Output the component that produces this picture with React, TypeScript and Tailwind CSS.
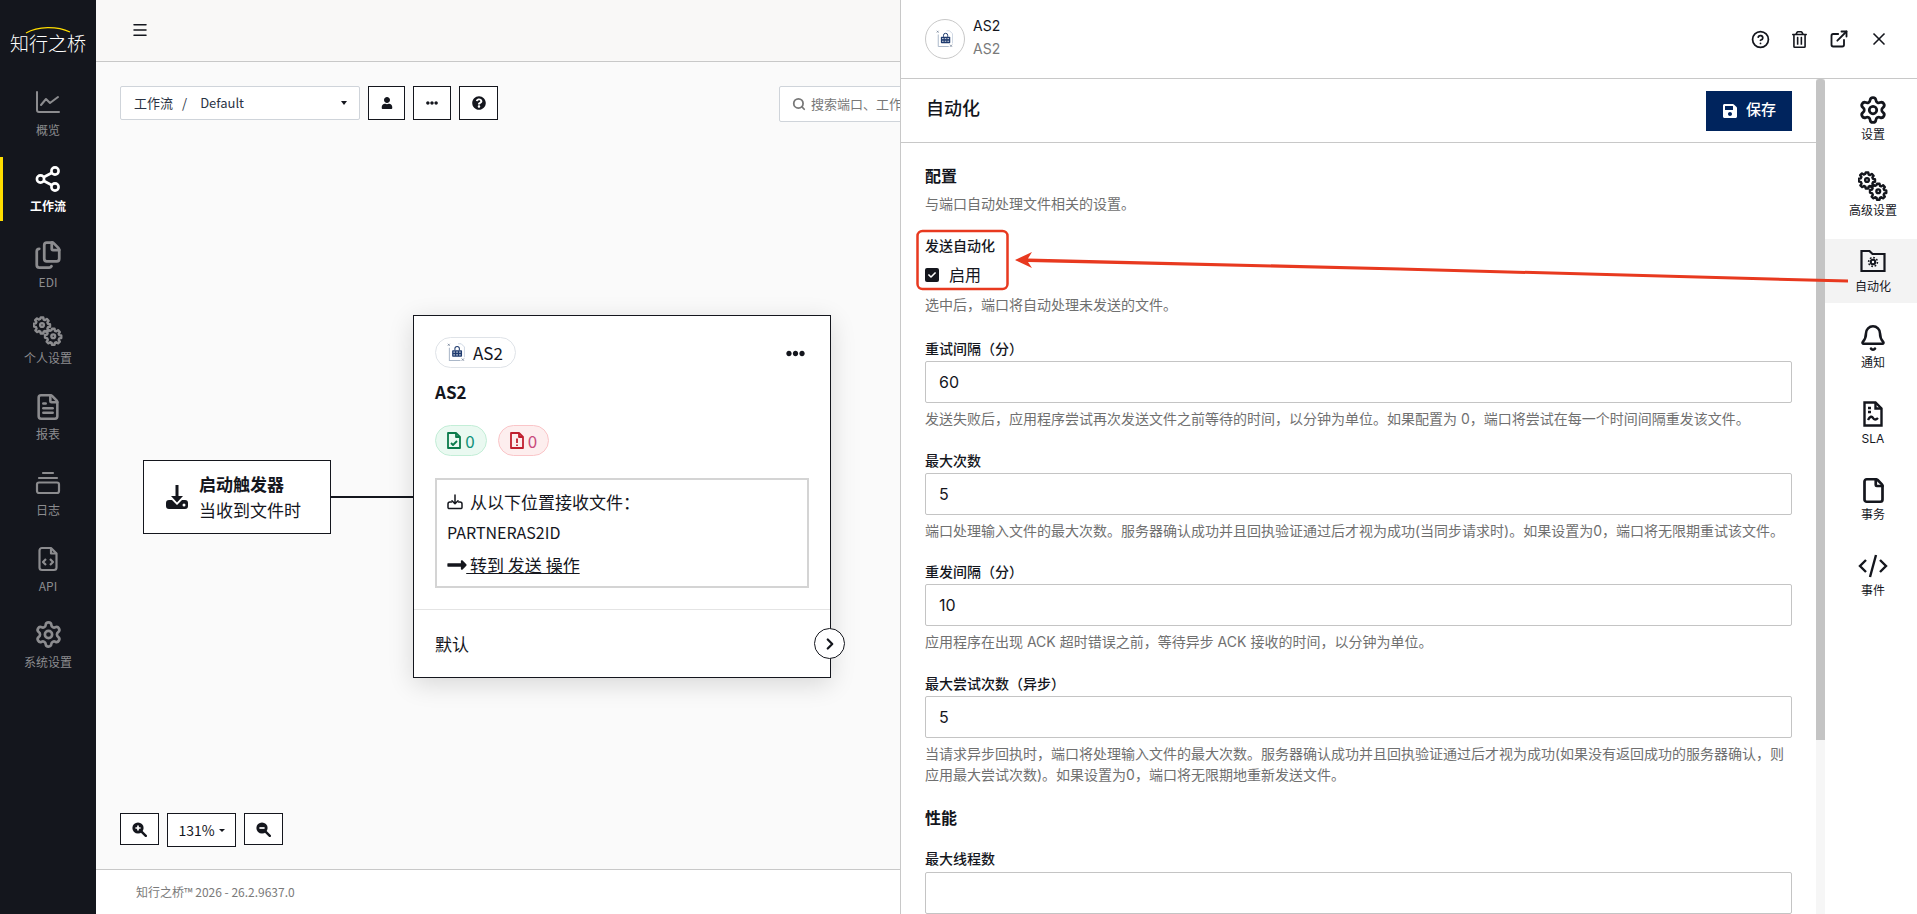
import React from "react";
import {
  Files, FileText, Settings, HelpCircle, ExternalLink, X, Bell, File, ChevronRight, Search, Menu,
} from "lucide-react";
import { FaUser, FaEllipsisH, FaQuestionCircle, FaLongArrowAltRight, FaCheck, FaSave, FaRegTrashAlt } from "react-icons/fa";

const cjk = "font-['Noto_Sans_CJK_SC','Noto_Sans',sans-serif]";
const panelFont = "font-['Inter','Noto_Sans_CJK_SC',sans-serif]";

function Gears({ size = 30 }: { size?: number }) {
  const g = "M12 9.5a2.5 2.5 0 1 0 0 5 2.5 2.5 0 0 0 0-5z M10.3 2h3.4l.5 2.7 1.9.8 2.3-1.6 2.4 2.4-1.6 2.3.8 1.9 2.7.5v3.4l-2.7.5-.8 1.9 1.6 2.3-2.4 2.4-2.3-1.6-1.9.8-.5 2.7h-3.4l-.5-2.7-1.9-.8-2.3 1.6-2.4-2.4 1.6-2.3-.8-1.9L1 13.7v-3.4l2.7-.5.8-1.9-1.6-2.3 2.4-2.4 2.3 1.6 1.9-.8z";
  return (
    <svg width={size} height={size} viewBox="0 0 40 40" fill="none" stroke="currentColor" strokeWidth="3.2" strokeLinejoin="round">
      <path d={g} />
      <g transform="translate(15 15)"><path d={g} /></g>
    </svg>
  );
}

function PortIcon({ size = 18 }: { size?: number }) {
  return (
    <svg width={size} height={size} viewBox="0 0 24 24" fill="none">
      <path d="M14 1h4l4 4v13" stroke="#cbd5e1" strokeWidth="1.2" />
      <path d="M3 6v16h14" stroke="#aab7c8" strokeWidth="1.3" />
      <path d="M1 1l2.5 2.5M3.5 1L1 3.5M18.5 19.5l3 3M21.5 19.5l-3 3" stroke="#64748b" strokeWidth="0.9" />
      <rect x="6.5" y="9" width="12.5" height="8.5" rx="1" fill="#1e3a6e" />
      <path d="M10 9V7a2.8 2.6 0 0 1 5.6 0v2" stroke="#1e3a6e" strokeWidth="1.3" />
      <path d="M8 11.5h2.2M11.6 11.5h2.2M15.2 11.5h2.2M8 15h2.2M11.6 15h2.2M15.2 15h2.2" stroke="#fff" strokeWidth="1.1" />
    </svg>
  );
}

function ZoomIcon({ plus }: { plus?: boolean }) {
  return (
    <svg width="15" height="15" viewBox="0 0 15 15" fill="none">
      <circle cx="6" cy="6" r="5.6" fill="#14161d" />
      <path d={plus ? "M3.4 6h5.2M6 3.4v5.2" : "M3.4 6h5.2"} stroke="#fff" strokeWidth="1.7" />
      <path d="M9.8 9.8L13.8 13.8" stroke="#14161d" strokeWidth="2.4" strokeLinecap="round" />
    </svg>
  );
}

function SideItem({ icon, label, active }: { icon: React.ReactNode; label: string; active?: boolean }) {
  return (
    <div className={`relative flex h-16 flex-col items-center justify-center gap-[3px] ${active ? "border-l-[3px] border-[#ffdd00] pr-[3px] font-bold text-white" : "text-[#8c8c8f]"}`}>
      <div className="flex h-[30px] items-center justify-center">{icon}</div>
      <div className="text-xs leading-[18px]">{label}</div>
    </div>
  );
}

function RailItem({ icon, label, active }: { icon: React.ReactNode; label: string; active?: boolean }) {
  return (
    <div className={`flex h-16 flex-col items-center justify-center gap-[1px] pl-[4px] text-[#14161d] ${active ? "bg-[#f3f3f3]" : ""}`}>
      <div className="flex h-[30px] items-center justify-center">{icon}</div>
      <div className="text-xs leading-[17px]">{label}</div>
    </div>
  );
}

function Field({ label, value, help }: { label: string; value: string; help: React.ReactNode }) {
  return (
    <div className="mb-[21.67px]">
      <div className="mb-[2px] text-[14px] font-medium leading-[20px] text-[#14161d]">{label}</div>
      <div className="flex h-[42px] items-center rounded-[2px] border border-[#c4c4c4] bg-white px-[13px] text-[16px] text-[#14161d]">{value}</div>
      <div className="mt-[5px] text-[14px] leading-[21px] text-[#707070]">{help}</div>
    </div>
  );
}

function CanvasButton({ children, className = "" }: { children: React.ReactNode; className?: string }) {
  return <div className={`flex shrink-0 items-center justify-center border-[1.5px] border-[#14161d] bg-white text-[#14161d] ${className}`}>{children}</div>;
}

export default function App() {
  return (
    <div className={`relative flex h-[914px] w-[1917px] overflow-hidden bg-white ${cjk}`}>
      <aside className="flex w-24 shrink-0 flex-col bg-[#14161d]">
        <div className="relative flex h-[81px] flex-col items-center pt-[30px]">
          <svg className="absolute left-[24px] top-[25px]" width="48" height="9" viewBox="0 0 48 9" fill="none">
            <path d="M2 8C14 1 33 1 46 7" stroke="#ffdd00" strokeWidth="1.3" />
          </svg>
          <div className="text-[19px] font-light leading-[26px] text-white">知行之桥</div>
        </div>
        <div className="flex flex-col gap-3">
          <SideItem label="概览" icon={<svg width="26" height="25" viewBox="0 0 26 25" fill="none" stroke="currentColor" strokeWidth="2" strokeLinejoin="round" strokeLinecap="round"><path d="M2 2v18a2 2 0 0 0 2 2h20" /><path d="M6 15l5-6 4 4 8-6" /></svg>} />
          <SideItem active label="工作流" icon={<svg width="26" height="26" viewBox="0 0 26 26" fill="none" stroke="currentColor" strokeWidth="2.6"><circle cx="5.5" cy="13" r="3.6" /><circle cx="20" cy="5" r="3.6" /><circle cx="20" cy="21" r="3.6" /><path d="M9 11l7.5-4M9 15l7.5 4" /></svg>} />
          <SideItem label="EDI" icon={<Files size={30} strokeWidth={2.2} />} />
          <SideItem label="个人设置" icon={<Gears />} />
          <SideItem label="报表" icon={<FileText size={28} strokeWidth={2.2} />} />
          <SideItem label="日志" icon={<svg width="26" height="24" viewBox="0 0 26 24" fill="none" stroke="currentColor" strokeWidth="2.2" strokeLinecap="round"><path d="M8 2h10M4 7h18" /><rect x="2" y="11.5" width="22" height="10.5" rx="2" /></svg>} />
          <SideItem label="API" icon={<svg width="24" height="26" viewBox="0 0 24 26" fill="none" stroke="currentColor" strokeWidth="2.2" strokeLinejoin="round"><path d="M15 2H6a2.5 2.5 0 0 0-2.5 2.5v17A2.5 2.5 0 0 0 6 24h12a2.5 2.5 0 0 0 2.5-2.5V7.5z" /><path d="M15 2v5.5h5.5" /><path d="M10 13l-3 3 3 3M14 13l3 3-3 3" /></svg>} />
          <SideItem label="系统设置" icon={<Settings size={29} strokeWidth={2.2} />} />
        </div>
      </aside>

      <main className="flex w-[804px] shrink-0 flex-col overflow-hidden bg-[#fafafa]">
        <div className="flex h-[62px] shrink-0 items-center border-b border-[#c8c8c8] bg-[#f9f8f7] pb-[2px] pl-[35px]">
          <Menu size={18} strokeWidth={2} className="text-[#14161d]" />
        </div>
        <div className="relative flex-1">
          <div className="flex items-start pl-[24px] pt-[24px]">
            <div className="flex h-[34px] w-[240px] shrink-0 items-center rounded-[2px] border border-[#cfd4da] bg-white pl-[13px] pr-[12px] text-[13px] text-[#2a3344]">
              <span>工作流</span>
              <span className="ml-[9px]">/</span>
              <span className="ml-[13px]">Default</span>
              <span className="ml-auto h-0 w-0 border-x-[3.5px] border-t-[4px] border-x-transparent border-t-[#14161d]" />
            </div>
            <CanvasButton className="ml-[8px] h-[34px] w-[37px]"><FaUser size={12} /></CanvasButton>
            <CanvasButton className="ml-[8px] h-[34px] w-[38px]"><FaEllipsisH size={12} /></CanvasButton>
            <CanvasButton className="ml-[8px] h-[34px] w-[39px]"><FaQuestionCircle size={14} /></CanvasButton>
            <div className="ml-[281px] flex h-[36px] w-[200px] shrink-0 items-center gap-[5px] rounded-[2px] border border-[#cfd4da] bg-white pl-[12px] text-[13px] text-[#777777]">
              <Search size={14} strokeWidth={3} />
              <span className="whitespace-nowrap">搜索端口、工作流</span>
            </div>
          </div>

          <div className="absolute left-[235px] top-[434px] h-[2px] w-[82px] bg-[#14161d]" />

          <div className="absolute left-[47px] top-[398px] flex h-[74px] w-[188px] items-center border-[1.5px] border-[#14161d] bg-white pl-[21px]">
            <svg width="24" height="26" viewBox="0 0 24 26" fill="#14161d" className="mr-[10px]">
              <path d="M10.5 1h3v11h4.5L12 18.5 6 12h4.5z" />
              <path d="M1 19a3 3 0 0 1 3-3h3l5 5 5-5h3a3 3 0 0 1 3 3v3a3 3 0 0 1-3 3H4a3 3 0 0 1-3-3z" />
              <circle cx="19" cy="21" r="1.5" fill="#fff" />
            </svg>
            <div className="text-[17px] leading-[26px] text-[#14161d]">
              <div className="font-bold">启动触发器</div>
              <div>当收到文件时</div>
            </div>
          </div>

          <div className="absolute left-[317px] top-[253px] h-[363px] w-[418px] border-[1.5px] border-[#14161d] bg-white shadow-[0_6px_24px_rgba(0,0,0,0.14)]">
            <div className="px-[21px] pt-[21px]">
              <div className="flex items-center justify-between">
                <div className="flex h-[31px] items-center gap-[7px] rounded-full border border-[#dfe3e8] pl-[11px] pr-[12px] text-[17px] text-[#14161d]">
                  <PortIcon size={19} />
                  <span>AS2</span>
                </div>
                <FaEllipsisH size={19} className="mr-[4px] mt-[2px] text-[#14161d]" />
              </div>
              <div className="mt-[10px] text-[17px] font-bold leading-[28px] text-[#14161d]">AS2</div>
              <div className="mt-[19px] flex gap-[11px] text-[17px]">
                <div className="flex h-[31px] w-[52px] items-center justify-center gap-[4px] rounded-full border border-[#c3eed7] bg-[#eaf9f1] text-[#11917a]">
                  <svg width="14" height="17" viewBox="0 0 14 17" fill="none" stroke="#0a7a4b" strokeWidth="1.8" strokeLinejoin="round"><path d="M1 1h8l4 4v11H1z" /><path d="M9 1v4h4" /><path d="M4 11l2 2 4-4" /></svg>
                  <span>0</span>
                </div>
                <div className="flex h-[31px] w-[51px] items-center justify-center gap-[4px] rounded-full border border-[#fac5c8] bg-[#fdeeee] text-[#c84a7c]">
                  <svg width="14" height="17" viewBox="0 0 14 17" fill="none" stroke="#c01f2e" strokeWidth="1.8" strokeLinejoin="round"><path d="M1 1h8l4 4v11H1z" /><path d="M9 1v4h4" /><path d="M7 6.5V11M7 12.5v1.5" /></svg>
                  <span>0</span>
                </div>
              </div>
              <div className="mt-[22px] h-[110px] w-[374px] border-2 border-[#d4d4d4] px-[10px] pt-[6px] text-[17px] leading-[31px] text-[#14161d]">
                <div className="flex items-center gap-[7px]">
                  <svg width="16" height="16" viewBox="0 0 16 16" fill="none" stroke="#14161d" strokeWidth="1.5" strokeLinecap="round" strokeLinejoin="round"><path d="M8 1v8.5M5 6.8l3 3 3-3" /><path d="M4.5 8H3a2 2 0 0 0-2 2v3.5a1 1 0 0 0 1 1h12a1 1 0 0 0 1-1V10a2 2 0 0 0-2-2h-1.5" /></svg>
                  <span>从以下位置接收文件：</span>
                </div>
                <div className="text-[16px]">PARTNERAS2ID</div>
                <div className="mt-[1px] flex items-center">
                  <FaLongArrowAltRight size={22} className="-mx-[1.4px]" />
                  <span className="underline">&nbsp;转到 发送 操作</span>
                </div>
              </div>
            </div>
            <div className="mt-[21px] border-t border-[#e4e4e4] pl-[21px] pt-[20px] text-[17px] leading-[28px] text-[#14161d]">默认</div>
            <div className="absolute right-[-15px] top-[312px] flex h-[31px] w-[31px] items-center justify-center rounded-full border-[1.5px] border-[#14161d] bg-white">
              <ChevronRight size={18} strokeWidth={3} className="text-[#14161d]" />
            </div>
          </div>

          <div className="absolute left-[24px] top-[751px] flex items-start gap-[8px] text-[14px]">
            <CanvasButton className="h-[32px] w-[39px]"><ZoomIcon plus /></CanvasButton>
            <CanvasButton className="h-[34px] w-[69px] gap-[4px]"><span>131%</span><span className="h-0 w-0 border-x-[3px] border-t-[3.5px] border-x-transparent border-t-[#14161d]" /></CanvasButton>
            <CanvasButton className="h-[32px] w-[39px]"><ZoomIcon /></CanvasButton>
          </div>
        </div>
        <div className="flex h-[45px] shrink-0 items-center border-t border-[#c8c8c8] bg-white pl-[40px] text-[12px] text-[#7a7a7a]">知行之桥™ 2026 - 26.2.9637.0</div>
      </main>

      <section className={`flex w-[1017px] shrink-0 flex-col border-l border-[#c8c8c8] bg-white ${panelFont}`}>
        <header className="flex h-[79px] shrink-0 items-center border-b border-[#c8c8c8] pl-[24px] pr-[28px]">
          <div className="flex h-10 w-10 items-center justify-center rounded-full border border-[#c8c8c8]"><PortIcon size={18} /></div>
          <div className="-mt-[4px] ml-[8px] text-[14px] leading-[23px]">
            <div className="text-[#14161d]">AS2</div>
            <div className="text-[#7a7a7a]">AS2</div>
          </div>
          <div className="ml-auto flex items-center gap-[20px] text-[#14161d]">
            <HelpCircle size={19} strokeWidth={2.2} />
            <FaRegTrashAlt size={17} className="mx-[1px]" />
            <ExternalLink size={20} strokeWidth={2.2} />
            <X size={20} strokeWidth={2} />
          </div>
        </header>
        <div className="flex min-h-0 flex-1">
          <div className="flex w-[915px] shrink-0 flex-col overflow-hidden">
            <div className="flex h-[64px] shrink-0 items-center justify-between border-b border-[#c8c8c8] pl-[25px] pr-[24px]">
              <div className="pb-[4px] text-[18px] font-medium text-[#14161d]">自动化</div>
              <div className="flex h-10 w-[86px] items-center justify-center gap-[8px] bg-[#00245d] text-[15px] font-medium text-white">
                <FaSave size={16} />
                <span>保存</span>
              </div>
            </div>
            <div className="min-h-0 flex-1 overflow-hidden pl-[24px] pr-[24px] pt-[21px]">
              <div className="text-[16px] font-bold leading-[24px] text-[#14161d]">配置</div>
              <div className="mt-[5px] text-[14px] leading-[21px] text-[#707070]">与端口自动处理文件相关的设置。</div>
              <div className="mt-[22px] text-[14px] font-medium leading-[20px] text-[#14161d]">发送自动化</div>
              <div className="mt-[9px] flex items-center gap-[10px] text-[16px] leading-[20px] text-[#14161d]">
                <span className="flex h-[14px] w-[14px] items-center justify-center rounded-[2px] bg-[#14161d] text-white"><FaCheck size={8} /></span>
                <span>启用</span>
              </div>
              <div className="mb-[24px] mt-[9px] text-[14px] leading-[21px] text-[#707070]">选中后，端口将自动处理未发送的文件。</div>
              <Field label="重试间隔（分）" value="60" help="发送失败后，应用程序尝试再次发送文件之前等待的时间，以分钟为单位。如果配置为 0，端口将尝试在每一个时间间隔重发该文件。" />
              <Field label="最大次数" value="5" help="端口处理输入文件的最大次数。服务器确认成功并且回执验证通过后才视为成功(当同步请求时)。如果设置为0，端口将无限期重试该文件。" />
              <Field label="重发间隔（分）" value="10" help="应用程序在出现 ACK 超时错误之前，等待异步 ACK 接收的时间，以分钟为单位。" />
              <Field label="最大尝试次数（异步）" value="5" help="当请求异步回执时，端口将处理输入文件的最大次数。服务器确认成功并且回执验证通过后才视为成功(如果没有返回成功的服务器确认，则应用最大尝试次数)。如果设置为0，端口将无限期地重新发送文件。" />
              <div className="-mt-[0.5px] text-[16px] font-bold leading-[24px] text-[#14161d]">性能</div>
              <div className="mb-[3px] mt-[19px] text-[14px] font-medium leading-[20px] text-[#14161d]">最大线程数</div>
              <div className="h-[42px] rounded-[2px] border border-[#c4c4c4] bg-white" />
            </div>
          </div>
          <div className="w-[9px] shrink-0 bg-[#f6f6f6]">
            <div className="h-[661px] rounded-t-[3px] bg-[#c4c4c4]" />
          </div>
          <nav className="flex w-[92px] shrink-0 flex-col gap-3 pt-[8px]">
            <RailItem label="设置" icon={<Settings size={30} strokeWidth={2.2} />} />
            <RailItem label="高级设置" icon={<Gears size={30} />} />
            <RailItem active label="自动化" icon={<svg width="26" height="24" viewBox="0 0 26 24" fill="none" stroke="currentColor" strokeWidth="2.2" strokeLinejoin="miter" className="-mt-[3px]"><path d="M1.5 2h8l3 3h12v17h-23z" /><circle cx="13" cy="13" r="3.2" fill="currentColor" stroke="none" /><circle cx="13" cy="13" r="4.4" strokeDasharray="1.7 1.7" strokeWidth="1.6" /><circle cx="13" cy="13" r="1.2" fill="#fff" stroke="none" /></svg>} />
            <RailItem label="通知" icon={<Bell size={28} strokeWidth={2.2} />} />
            <RailItem label="SLA" icon={<svg width="20" height="26" viewBox="0 0 20 26" fill="none" stroke="currentColor" strokeWidth="2.4"><path d="M1.5 1.5h11l6 6v17h-17z" /><path d="M12.5 1.5v6h6" /><path d="M5 7h3M5 11h3" /><path d="M5 19c2-4 4-4 5-2s3 2 5 0" /></svg>} />
            <RailItem label="事务" icon={<File size={27} strokeWidth={2.4} />} />
            <RailItem label="事件" icon={<svg width="30" height="26" viewBox="0 0 30 26" fill="none" stroke="currentColor" strokeWidth="2.4"><path d="M8 7l-6 6 6 6M22 7l6 6-6 6M18 2l-6 22" /></svg>} />
          </nav>
        </div>
      </section>

      <svg className="pointer-events-none absolute left-0 top-0" width="1917" height="914" fill="none">
        <rect x="917.5" y="231" width="90" height="58" rx="5" stroke="#e8391f" strokeWidth="2.5" />
        <path d="M1015 260L1032 252L1028 258.5L1400 267.5L1848 279.5V282.5L1400 270.5L1028 262L1032 268Z" fill="#e8391f" />
      </svg>
    </div>
  );
}
